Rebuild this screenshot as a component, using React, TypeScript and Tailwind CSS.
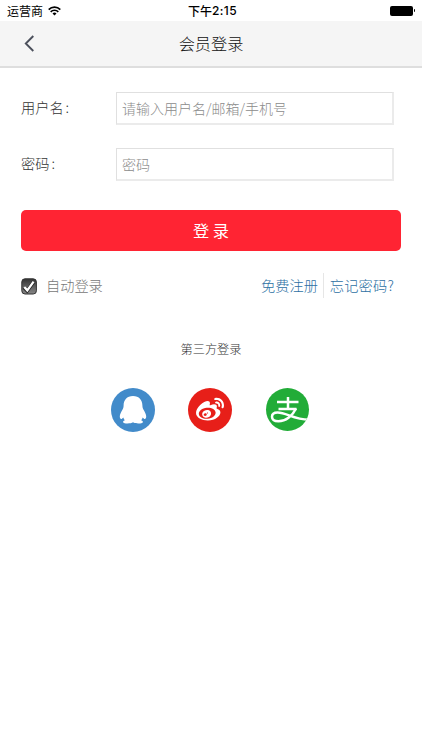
import type { ReactNode } from "react";
import { FaWeibo } from "react-icons/fa";

function StatusBar() {
  return (
    <div className="grid h-[21px] grid-cols-3 items-center px-[7px] text-[12px] leading-[21px] text-black">
      <div className="flex items-center gap-[5px]">
        <span>运营商</span>
        <svg width="13" height="10" viewBox="0 0 13 10" fill="none" stroke="#000" strokeWidth="1.7">
          <path d="M0.7 3.6a8.2 8.2 0 0 1 11.6 0" />
          <path d="M2.7 5.8a5.4 5.4 0 0 1 7.6 0" />
          <path d="M6.5 9.6 4.5 7.5a2.9 2.9 0 0 1 4 0Z" fill="#000" stroke="none" />
        </svg>
      </div>
      <div className="flex items-center justify-center whitespace-nowrap pl-[3px] font-medium">
        下午<span className="font-['Inter'] text-[12px] tracking-[0.35px]">2:15</span>
      </div>
      <div className="flex items-center justify-end gap-px">
        <div className="h-[10px] w-[23px] rounded-[2px] bg-black" />
        <div className="h-[3px] w-px rounded-r bg-black" />
      </div>
    </div>
  );
}

function Field({ label, placeholder, type }: { label: string; placeholder: string; type: string }) {
  return (
    <label className="flex h-[33px] items-center">
      <span className="w-[95px] pb-px text-[14.2px] text-[#333]">
        {label}
        <span className="ml-[2px]">:</span>
      </span>
      <input
        type={type}
        placeholder={placeholder}
        className="h-[33px] w-[278px] border border-r-2 border-b-2 border-[#e0e0e0] border-r-[#ebebeb] border-b-[#ebebeb] bg-white pr-[6px] pb-px pl-[5px] text-[14px] outline-none placeholder:text-[#8c8c8c]"
      />
    </label>
  );
}

function Circle({ className, children }: { className: string; children: ReactNode }) {
  return <button className={`flex items-center justify-center rounded-full ${className}`}>{children}</button>;
}

export default function App() {
  return (
    <div className="min-h-[750px] w-full bg-white font-['Noto_Sans_CJK_SC',sans-serif]">
      <StatusBar />
      <header className="grid h-[47px] grid-cols-[60px_1fr_60px] items-center border-b-2 border-[#dedede] bg-[#f5f5f5]">
        <button className="pl-[24px]">
          <svg width="11" height="17" viewBox="0 0 11 17" fill="none" stroke="#4c505c" strokeWidth="1.9">
            <path d="M9.3 1 1.8 8.5l7.5 7.5" />
          </svg>
        </button>
        <h1 className="text-center text-[16.2px] font-light text-[#111]">会员登录</h1>
      </header>

      <main className="pt-[24px] pr-[21px] pl-[21px] font-light">
        <div className="flex flex-col gap-[23px]">
          <Field label="用户名" placeholder="请输入用户名/邮箱/手机号" type="text" />
          <Field label="密码" placeholder="密码" type="password" />
        </div>

        <button className="mt-[29px] flex h-[41px] w-full items-center justify-center rounded-[5px] bg-[#ff2433] pb-px text-[16.3px] font-normal text-white">
          登 录
        </button>

        <div className="mt-[21px] flex h-[26px] items-end justify-between">
          <label className="mb-px flex items-center text-[14.2px] leading-[24px] text-[#777]">
            <svg className="mt-[2px] mr-[9px]" width="16" height="17" viewBox="0 0 16 17">
              <defs>
                <linearGradient id="box" x1="0" y1="0" x2="0" y2="1">
                  <stop offset="0" stopColor="#333" />
                  <stop offset="1" stopColor="#888" />
                </linearGradient>
              </defs>
              <rect x="0.8" y="0.8" width="14.6" height="15.2" rx="3.2" fill="url(#box)" stroke="#333" />
              <path d="m3 9.5 3.2 3.3 6.5-9" fill="none" stroke="#222" strokeWidth="3.6" />
              <path d="m3.3 8.9 3 3.4 6.3-8.7" fill="none" stroke="#fff" strokeWidth="2.3" />
            </svg>
            自动登录
          </label>
          <div className="flex h-[25px] items-center pr-[7px] text-[14.2px] text-[#2d6fa3]">
            <a>免费注册</a>
            <i className="mr-[6px] ml-[5px] h-[25px] w-px bg-[#e6e6e6]" />
            <a className="tracking-[0.2px]">忘记密码?</a>
          </div>
        </div>

        <p className="mt-[41px] text-center text-[12.2px] leading-[20px] text-[#333]">第三方登录</p>

        <div className="mt-[29px] flex justify-center gap-[33px] pr-[2px]">
          <Circle className="size-[44px] bg-[#428bca]">
            <svg width="28" height="30" viewBox="0 0 28 30" fill="#fff">
              <path d="M14 1C7.8 1 4.6 5.200 4.600 10.500c0 2-.5 3-1.300 4.500C1.900 17.700.8 19.500.8 21.500c0 2 .8 2.800 1.900 2.400.6-.2 1.100-.7 1.600-1.300.4 1.100.8 1.800 1.500 2.600-1.200.5-1.900 1.100-1.700 2 .5 1.700 7.800 1.700 9.900.1 2.100 1.600 9.400 1.600 9.900-.1.200-.9-.5-1.500-1.700-2 .7-.8 1.100-1.500 1.500-2.600.5.600 1 1.100 1.600 1.300 1.100.4 1.900-.4 1.900-2.400 0-2-1.100-3.800-2.500-6.500-.8-1.500-1.300-2.500-1.300-4.500C23.400 5.200 20.200 1 14 1Z" />
            </svg>
          </Circle>
          <Circle className="size-[44px] bg-[#e71f19]">
            <FaWeibo size={28} color="#fff" />
          </Circle>
          <Circle className="ml-px size-[43px] overflow-hidden bg-[#22ac38]">
            <svg width="43" height="43" viewBox="0 0 43 43" fill="none" stroke="#fff" strokeWidth="2.5">
              <path d="M11 14h21.500M22 9v12M12.500 21h18" />
              <path d="M30 20.500C26.500 28 19.500 33.300 12.500 33.300c-4.200 0-6.500-1.700-6.500-4.500 0-2.700 2.300-4.300 5.600-4.300 8.900 0 16 7 31.400 7.200" />
            </svg>
          </Circle>
        </div>
      </main>
    </div>
  );
}
